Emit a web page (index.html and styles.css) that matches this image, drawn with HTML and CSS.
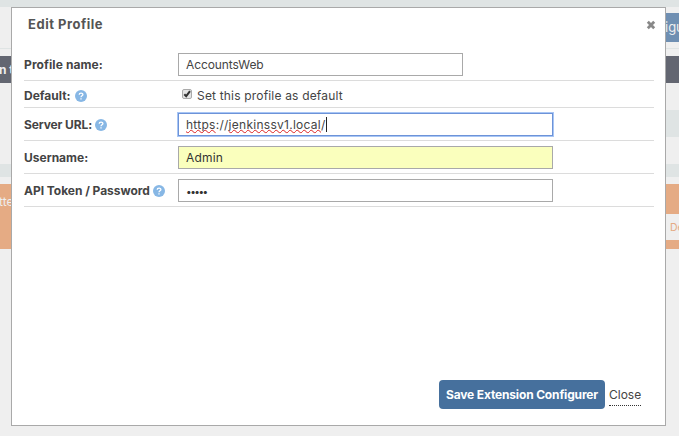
FILE: index.html
```
<!DOCTYPE html>
<html lang="en">
<head>
<meta charset="utf-8">
<title>Edit Profile</title>
<link rel="stylesheet" href="styles.css">
</head>
<body>
<div class="backdrop">
  <div class="topbar"></div>
  <div class="toolbar"><span class="toolbar-button">igu</span></div>
  <div class="table-head"><span>n t</span></div>
  <div class="right-band"></div>
  <div class="wide-band"></div>
  <div class="notice">
    <div class="notice-left">tte</div>
    <div class="notice-right"><span class="notice-tab">De</span></div>
  </div>
</div>
<div class="dialog">
  <header class="dialog-header">
    <h1 class="title">Edit Profile</h1>
    <svg class="dismiss" viewBox="0 0 10 10"><path d="M1.8 1.8L8.2 8.2M8.2 1.8L1.8 8.2"/></svg>
  </header>
  <form class="form">
    <div class="row"><label class="label t-name">Profile name:</label><div class="input short"><span class="t-acc">AccountsWeb</span></div></div>
    <div class="row low"><label class="label">Default:</label><svg class="help" viewBox="0 0 12 12"><circle cx="6" cy="6" r="6"/><path d="M4.2 4.7C4.2 2.5 7.9 2.5 7.9 4.6C7.9 5.8 6 5.8 6 7.2M6 8.3V9.5"/></svg>
      <div class="check-line"><svg class="check" viewBox="0 0 10 10"><rect x=".5" y=".5" width="9" height="9" rx="1.5"/><path d="M2.3 5.2L4.2 7.2L8 2.2"/></svg><span class="t-set">Set this profile as default</span></div></div>
    <div class="row"><label class="label t-server">Server URL:</label><svg class="help near" viewBox="0 0 12 12"><circle cx="6" cy="6" r="6"/><path d="M4.2 4.7C4.2 2.5 7.9 2.5 7.9 4.6C7.9 5.8 6 5.8 6 7.2M6 8.3V9.5"/></svg><div class="input focused"><span class="url"><span class="misspelt">https</span>://<span class="misspelt">jenkinssv1.local</span>/</span><span class="caret"></span></div></div>
    <div class="row"><label class="label">Username:</label><div class="input filled"><span class="t-admin">Admin</span></div></div>
    <div class="row"><label class="label t-token">API Token / Password</label><svg class="help near" viewBox="0 0 12 12"><circle cx="6" cy="6" r="6"/><path d="M4.2 4.7C4.2 2.5 7.9 2.5 7.9 4.6C7.9 5.8 6 5.8 6 7.2M6 8.3V9.5"/></svg><div class="input"><span class="dots">•••••</span></div></div>
  </form>
  <footer class="actions"><button class="save" type="button">Save Extension Configurer</button><a class="close">Close</a></footer>
</div>
</body>
</html>
```
FILE: styles.css
```
* { box-sizing: border-box; }
body { margin: 0; width: 679px; height: 436px; overflow: hidden; position: relative; background: #efefef; font: 12px/16px Inter, "Liberation Sans", sans-serif; color: #444; }
.topbar { height: 7px; background: #dfe4e4; }
.toolbar { height: 42px; border-bottom: 1px solid #dfe4e4; padding-top: 6px; }
.toolbar-button { display: block; height: 29px; margin-left: 660px; padding-left: 5px; background: #6f8fb2; color: #eee; font-size: 13px; line-height: 29px; white-space: nowrap; overflow: hidden; }
.table-head { height: 27px; margin-top: 7px; background: #636671; color: #eee; font-weight: 700; line-height: 27px; }
.table-head span { margin-left: -1px; }
.right-band { height: 27px; margin: 27px 0 0 660px; background: #dfe4e4; }
.wide-band { height: 13px; margin-top: 27px; background: #dfe4e4; }
.notice { display: flex; height: 65px; margin-top: 7px; background: #e5ab84; }
.notice-left { flex: none; width: 660px; padding-top: 10px; color: #eee; text-indent: -1px; }
.notice-right { flex: 1; min-width: 0; padding-top: 30px; }
.notice-tab { display: block; height: 26px; padding-left: 10px; background: #efefef; color: #e5ab84; font-size: 10.5px; line-height: 27px; }

.dialog { position: absolute; left: 11px; top: 7px; width: 655px; height: 419px; display: flex; flex-direction: column; background: #fff; border: 1px solid #a9a9a9; padding: 0 11px 16px 12px; }
.dialog-header { display: flex; justify-content: space-between; height: 40px; padding: 8px 0 0 4px; }
.title { margin: 0; font: 700 13px/16px Inter, sans-serif; letter-spacing: .52px; color: #555; }
.dismiss { width: 10px; height: 10px; margin: 4px -2px 0 0; }
.dismiss path { stroke: #888; stroke-width: 2.8; fill: none; }
.row { display: flex; align-items: center; height: 33px; padding-top: 1px; border-bottom: 1px solid #dcdcdc; }
.low { height: 27px; padding-top: 3px; }
.label { font-weight: 700; font-size: 12px; white-space: nowrap; }
.t-name { letter-spacing: .1px; }
.t-server { letter-spacing: -.12px; }
.t-token { letter-spacing: -.04px; }
.help { width: 12px; height: 12px; margin-left: 4px; flex: none; }
.near { margin-left: 3px; }
.help circle { fill: #87b7e5; }
.help path { fill: none; stroke: #fff; stroke-width: 1.3; }
.input, .check-line { display: flex; align-items: center; margin-left: auto; margin-right: 101px; width: 375px; height: 23px; white-space: nowrap; }
.input { border: 1px solid #a9a9a9; background: #fff; padding-left: 7px; }
.short { width: 285px; margin-right: 191px; }
.focused { border-color: #6d93d8; box-shadow: 0 0 0 1px #a8c6f5; }
.filled { background: #faffbd; color: #333; }
.check-line { padding-left: 4px; }
.check { width: 10px; height: 10px; margin: 0 5px 3px 0; }
.check rect { fill: #e4e4e4; stroke: #aaa; }
.check path { fill: none; stroke: #333; stroke-width: 2; }
.t-acc { letter-spacing: -.1px; }
.t-set, .t-admin { letter-spacing: .18px; }
.url { letter-spacing: .27px; }
.misspelt { text-decoration: underline wavy #d22 1px; text-decoration-skip-ink: none; text-underline-offset: 0; }
.caret { width: 1px; height: 15px; background: #222; }
.dots { font-size: 10px; letter-spacing: -1.5px; color: #333; }
.actions { display: flex; justify-content: flex-end; align-items: center; margin-top: auto; padding-right: 13px; height: 29px; }
.save { width: 166px; height: 29px; padding: 0 0 0 7px; border: 0; border-radius: 4px; background: #46709d; color: #fff; font: 700 12px/29px Inter, sans-serif; letter-spacing: -.16px; text-align: left; white-space: nowrap; }
.close { margin: 3px 0 0 4px; width: 32px; height: 19px; border-bottom: 1px dotted #333; white-space: nowrap; }
```
